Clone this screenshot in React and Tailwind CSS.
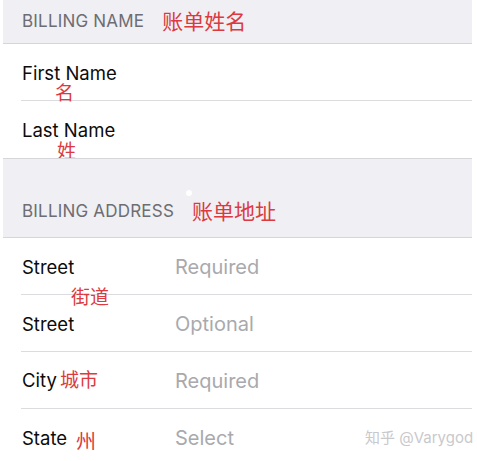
const red = "text-[#dc3a40]";

function Header({ title, note, className, children }) {
  return (
    <div className={"relative bg-[#efeff4] border-b border-[#d6d6da] flex pl-[19px] " + className}>
      <span className="text-[17px] text-[#6d6d72] tracking-[0.2px]">{title}</span>
      <span className={"ml-[18px] text-[21px] leading-[24px] " + red}>{note}</span>
      {children}
    </div>
  );
}

function Row({ label, placeholder, note, last }) {
  return (
    <div className={"relative h-[57px] ml-[18px] pl-[1px] pt-[3px] flex items-center " + (last ? "" : "border-b border-[#dcdcdf]")}>
      <span className="w-[153px] text-[18.5px] text-[#0b0b0b]">{label}</span>
      {placeholder && <span className="text-[20px] text-[#a9a9ad] -mt-[2px]">{placeholder}</span>}
      {note}
    </div>
  );
}

export default function App() {
  return (
    <div
      className="w-[477px] h-[461px] overflow-hidden bg-white pl-[3px] pr-[5px]"
      style={{ fontFamily: 'Inter, "Noto Sans CJK SC", sans-serif' }}
    >
      <Header title="BILLING NAME" note="账单姓名" className="h-[44px] items-center pt-[1px]" />

      <Row
        label="First Name"
        note={<span className={"absolute left-[34px] top-[39px] text-[19px] leading-[22px] " + red}>名</span>}
      />
      <div className="relative h-[57px] pl-[19px] pt-[3px] flex items-center">
        <span className="text-[18.5px] text-[#0b0b0b]">Last Name</span>
        <span className={"absolute left-[54px] top-[40px] text-[19px] leading-[22px] " + red}>姓</span>
      </div>

      <Header title="BILLING ADDRESS" note="账单地址" className="h-[80px] border-t items-end pb-[13px]">
        <span className="absolute left-[183px] top-[31px] w-[6px] h-[6px] rounded-full bg-white" />
      </Header>

      <Row
        label="Street"
        placeholder="Required"
        note={<span className={"absolute left-[50px] top-[49px] text-[19px] leading-[22px] z-10 " + red}>街道</span>}
      />
      <Row label="Street" placeholder="Optional" />
      <Row
        label={
          <>
            City <span className={"-ml-[2px] text-[19px] " + red}>城市</span>
          </>
        }
        placeholder="Required"
      />
      <Row
        label="State"
        placeholder="Select"
        last
        note={
          <>
            <span className={"absolute left-[55px] top-[21px] text-[20px] leading-[24px] " + red}>州</span>
            <span className="absolute left-[344px] top-[18px] whitespace-nowrap text-[15px] text-[#c9c9cc]">知乎 @Varygod</span>
          </>
        }
      />
    </div>
  );
}
